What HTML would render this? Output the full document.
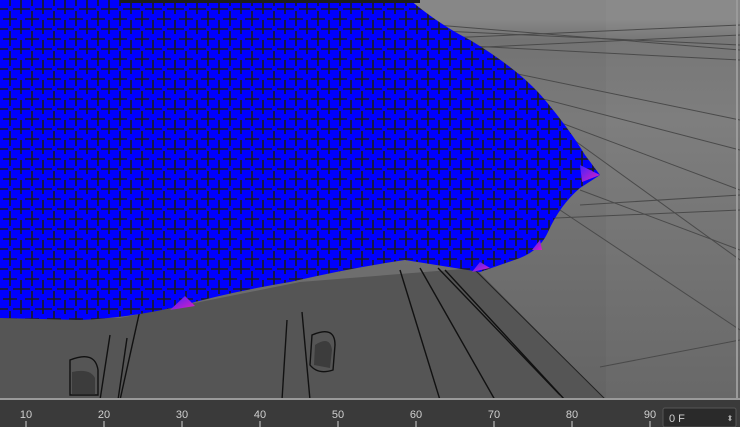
<!DOCTYPE html>
<html><head><meta charset="utf-8"><style>
html,body{margin:0;padding:0;width:740px;height:427px;overflow:hidden;background:#3b3b3b;font-family:"Liberation Sans",sans-serif}
svg{display:block}
</style></head><body>
<svg width="740" height="427" viewBox="0 0 740 427" xmlns="http://www.w3.org/2000/svg">
<defs>
<linearGradient id="bg" x1="0" y1="0" x2="0" y2="1">
<stop offset="0" stop-color="#878787"/><stop offset="0.05" stop-color="#878787"/><stop offset="0.1" stop-color="#737373"/><stop offset="0.3" stop-color="#7a7a7a"/><stop offset="1" stop-color="#646464"/>
</linearGradient>
<pattern id="grid" width="22" height="20" patternUnits="userSpaceOnUse">
<rect width="22" height="20" fill="#0000fe"/>
<path d="M0 9 H8 M13 9 H22 M3 19 H17 M10 0 V6 M10 11 V20 M21 0 V14" stroke="#1c1c1c" stroke-width="1.6"/>
</pattern>
<linearGradient id="mg" x1="0" y1="0" x2="1" y2="1"><stop offset="0" stop-color="#4020ff"/><stop offset="1" stop-color="#e020c0"/></linearGradient>
</defs>
<rect width="740" height="400" fill="url(#bg)"/>
<rect x="606" y="0" width="130" height="400" fill="#ffffff" opacity="0.03"/>
<g stroke="#4a4a4a" stroke-width="1" fill="none">
<path d="M400 22 L740 50"/><path d="M400 40 L740 25"/><path d="M420 50 L740 35"/>
<path d="M450 60 L740 120"/><path d="M470 80 L740 150"/><path d="M500 100 L740 190"/>
<path d="M560 130 L740 260"/><path d="M580 190 L740 250"/><path d="M560 210 L740 330"/>
<path d="M580 205 L740 195"/><path d="M600 367 L740 340"/><path d="M510 220 L740 210"/>
<path d="M420 30 L740 45"/><path d="M450 45 L740 60"/>
</g>
<polygon points="0,318 120,318 300,282 475,268 606,400 0,400" fill="#555555"/>
<path d="M475,270 L606,400" stroke="#222" stroke-width="1"/>
<g stroke="#111" stroke-width="1.4" fill="none">
<path d="M400 270 L440 400"/><path d="M420 268 L495 400"/><path d="M438 268 L560 395"/><path d="M445 270 L565 400"/>
<path d="M110 335 L100 400"/><path d="M127 338 L118 400"/><path d="M140 310 L120 400"/>
<path d="M287 320 L282 400"/><path d="M302 312 L310 400"/>
<path d="M70 360 Q95 350 98 370 L98 395 L70 395 Z"/>
<path d="M312 335 Q335 325 335 345 L333 370 Q318 375 310 365 Z"/>
</g>
<path d="M72 372 Q90 368 95 378 L95 395 L72 395 Z" fill="#2c2c2c" opacity="0.6"/>
<path d="M315 345 Q330 335 332 350 L330 368 L314 365 Z" fill="#2c2c2c" opacity="0.6"/>
<path d="M0,0 L410,0 Q440,25 470,40 Q520,70 545,100 Q570,130 585,155 L600,175 L580,188 Q560,205 548,232 Q540,250 520,258 L480,272 L405,260 Q350,268 290,282 Q230,292 180,306 Q130,318 80,320 L0,318 Z" fill="url(#grid)"/>
<polygon points="580,165 600,175 582,182" fill="url(#mg)"/>
<polygon points="170,310 185,296 195,306" fill="url(#mg)"/>
<polygon points="472,272 480,262 490,268" fill="url(#mg)"/>
<polygon points="532,250 540,240 542,250" fill="url(#mg)"/>
<rect x="120" y="0" width="300" height="3" fill="#1c1c1c"/>
<rect x="0" y="398" width="740" height="2" fill="#9a9a9a"/>
<rect x="736" y="0" width="2" height="400" fill="#9a9a9a"/>
<rect x="0" y="400" width="740" height="27" fill="#3a3a3a"/>
<g fill="#cfcfcf" font-size="11" text-anchor="middle">
<text x="26" y="418">10</text><text x="104" y="418">20</text><text x="182" y="418">30</text><text x="260" y="418">40</text><text x="338" y="418">50</text><text x="416" y="418">60</text><text x="494" y="418">70</text><text x="572" y="418">80</text><text x="650" y="418">90</text>
</g>
<g stroke="#cfcfcf" stroke-width="1">
<path d="M26 421V427M104 421V427M182 421V427M260 421V427M338 421V427M416 421V427M494 421V427M572 421V427M650 421V427"/>
</g>
<rect x="663" y="408" width="73" height="19" rx="2" fill="#2a2a2a" stroke="#555"/>
<text x="669" y="422" fill="#cfcfcf" font-size="11">0 F</text>
<text x="730" y="421" fill="#aaa" font-size="8" text-anchor="middle">⬍</text>
</svg>
</body></html>
